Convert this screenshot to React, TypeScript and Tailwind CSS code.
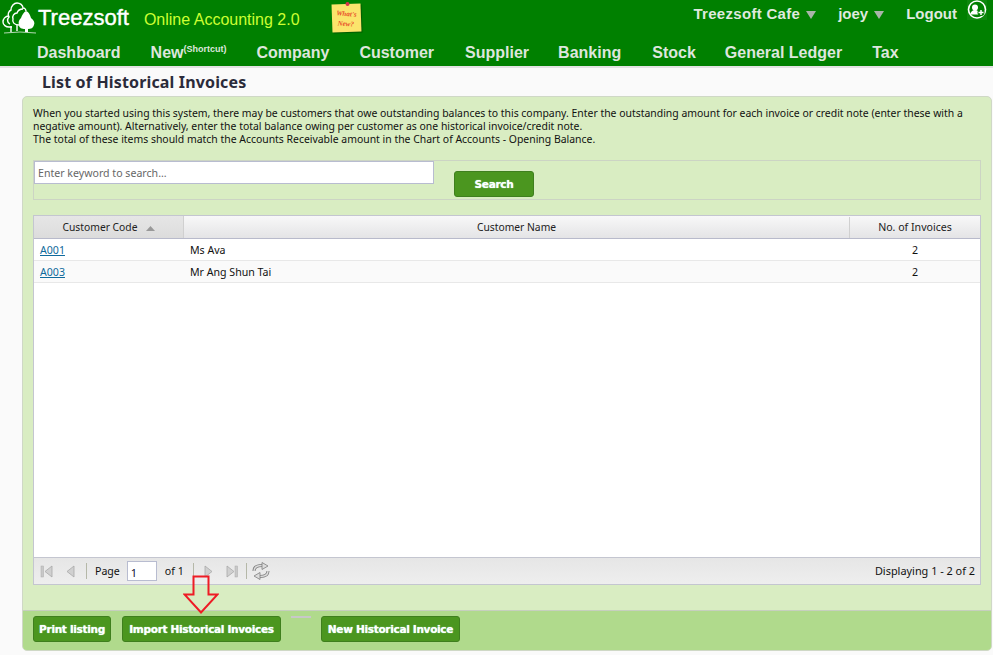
import React from 'react';

const NAV = [
  { label: 'Dashboard', ml: 'ml-[37px]' },
  { label: 'New', ml: 'ml-[30px]', sup: true },
  { label: 'Company', ml: 'ml-[30px]' },
  { label: 'Customer', ml: 'ml-[30px]' },
  { label: 'Supplier', ml: 'ml-[31px]' },
  { label: 'Banking', ml: 'ml-[29px]' },
  { label: 'Stock', ml: 'ml-[31px]' },
  { label: 'General Ledger', ml: 'ml-[29px]' },
  { label: 'Tax', ml: 'ml-[30px]' },
];

const TreeLogo = () => (
  <svg width="36" height="34" viewBox="2 0 36 34" className="shrink-0">
    <g fill="none" stroke="#fff" strokeWidth="1.4">
      <path d="M10 23C7 22 7 18 9 16C7 13 9 10 11 9C11 5 14 2 17 2C20 2 23 4 23 7C25 7 26 9 26 10" />
      <path d="M9 15C5 15 3 18 3 21C3 24 6 26 9 26L12 26" />
      <path d="M19 24C14 24 12 21 13 18C12 15 14 12 17 12C18 9 20 8 23 8" />
      <path d="M11 25v6M17 24v6" />
    </g>
    <path d="M26 10c3 1 4 4 5 7 3 2 4 5 3 7-1 3-3 4-6 4v3h-3v-3c-3 0-6-1-6-4-1-3 0-5 2-7 1-3 3-6 5-7z" fill="#fff" />
    <path d="M4 32Q20 30 36 32" fill="none" stroke="#fff" strokeWidth="1" opacity="0.7" />
  </svg>
);

const Note = () => (
  <div className="relative ml-[32px] mt-[3px] flex h-[28px] w-[29px] -rotate-2 items-center justify-center bg-[#fbe46c] shadow-[1px_1px_1px_rgba(0,0,0,0.3)]">
    <span className="absolute left-[14px] top-[-2px] h-[4px] w-[4px] rounded-full bg-[#d8324a]" />
    <span className="rotate-[6deg] pt-[2px] text-center font-['Liberation_Serif',serif] text-[7px] font-bold italic leading-[10px] text-[#e8502a]">
      What's
      <br />
      New?
    </span>
  </div>
);

const Caret = () => (
  <svg width="10" height="8" viewBox="0 0 10 8" className="ml-[6px] mt-[2px]">
    <path d="M0 0h10L5 8z" fill="#a9b5a9" />
  </svg>
);

const UserAdd = () => (
  <svg width="20" height="20" viewBox="0 0 20 20" className="ml-[10px] mt-[-1px]">
    <rect width="20" height="20" fill="#0d870d" />
    <circle cx="10" cy="9.500" r="8.500" fill="#008000" stroke="#fff" strokeWidth="1.600" />
    <circle cx="8" cy="7.500" r="3" fill="#fff" />
    <path d="M3.500 14.500c0-3 2-4.500 4.500-4.500s4.500 1.500 4.500 4.500z" fill="#fff" />
    <circle cx="14" cy="12.500" r="3.500" fill="#008000" />
    <path d="M14 10v5M11.500 12.500h5" stroke="#fff" strokeWidth="1.500" />
  </svg>
);

const GreenButton = ({ label, className }: { label: string; className: string }) => (
  <button
    type="button"
    className={`h-[26px] rounded-[3px] border border-[#3f7f1e] bg-[#4b961f] pt-[2px] text-center font-['DejaVu_Sans',sans-serif] text-[10.500px] font-bold tracking-[-0.3px] text-white [text-shadow:0_0_1px_#cfe] ${className}`}
  >
    {label}
  </button>
);

const PagerIcon = ({ d, bar }: { d: string; bar?: number }) => (
  <svg width="16" height="16" viewBox="0 0 16 16">
    {bar !== undefined && <rect x={bar} y="3" width="2.500" height="11" fill="#c8c8c8" stroke="#aaa" strokeWidth="0.500" />}
    <path d={d} fill="#d0d0d0" stroke="#a8a8a8" strokeWidth="0.800" />
  </svg>
);

const Sep = () => <div className="h-[16px] w-px bg-[#b5b8a8]" />;

const Row = ({ code, name, count, alt }: { code: string; name: string; count: number; alt?: boolean }) => (
  <div className={`flex h-[22px] items-center border-b border-[#e8e8e8] pt-[2px] text-[10.600px] ${alt ? 'bg-[#fafafa]' : 'bg-white'}`}>
    <div className="w-[150px] pl-[6px]">
      <a href="#" className="text-[#0f6a9c] underline">
        {code}
      </a>
    </div>
    <div className="flex-1 pl-[6px] text-[#111]">{name}</div>
    <div className="w-[130px] text-center text-[#111]">{count}</div>
  </div>
);

export default function App() {
  return (
    <div className="flex h-[655px] w-[993px] flex-col overflow-hidden bg-[#fafafa] font-['Noto_Sans',sans-serif] text-[11px]">
      {/* top header */}
      <header className="h-[68px] shrink-0 border-b-2 border-[#e2e2e2] bg-[#008000]">
        <div className="flex h-[37px] items-start pl-[2px] pt-px">
          <TreeLogo />
          <span className="mt-[1px] font-['Liberation_Sans',sans-serif] text-[22px] leading-[31px] text-white [-webkit-text-stroke:0.4px_#fff]">
            Treezsoft
          </span>
          <span className="ml-[15px] mt-[4px] font-['Liberation_Sans',sans-serif] text-[16px] leading-[30px] text-[#ccff33]">
            Online Accounting 2.0
          </span>
          <Note />
          <div className="ml-auto flex items-start pr-[6px] font-['Liberation_Sans',sans-serif] text-[15px] font-bold leading-[25px] text-[#dfe9df]">
            <span className="flex items-center">
              <span className="tracking-[0.3px]">Treezsoft Cafe</span>
              <Caret />
            </span>
            <span className="ml-[22px] flex items-center">
              joey
              <Caret />
            </span>
            <span className="ml-[22px]">Logout</span>
            <UserAdd />
          </div>
        </div>
        <nav className="flex h-[29px] items-center pt-[2px] font-['Liberation_Sans',sans-serif] text-[16px] font-bold text-[#dde6dd]">
          {NAV.map((n) => (
            <span key={n.label} className={n.ml}>
              {n.label}
              {n.sup && <sup className="top-[-6px] text-[9px] leading-none">(Shortcut)</sup>}
            </span>
          ))}
        </nav>
      </header>

      <h1 className="ml-[42px] h-[28px] shrink-0 text-[16px] font-bold leading-[28px] tracking-[0.15px] text-[#2b2b3a]">
        List of Historical Invoices
      </h1>

      {/* main panel */}
      <main className="mb-[4px] ml-[22px] mr-px flex flex-1 flex-col overflow-hidden rounded-[5px] border border-[#cfd8c6] bg-[#d9edc2]">
        <div className="flex min-h-0 flex-1 flex-col px-[10px]">
          <p className="mt-[10px] h-[53px] text-[10.430px] leading-[13px] text-[#111]">
            When you started using this system, there may be customers that owe outstanding balances to this company. Enter the outstanding amount for each invoice or credit note (enter these with a negative amount). Alternatively, enter the total balance owing per customer as one historical invoice/credit note.
            <br />
            The total of these items should match the Accounts Receivable amount in the Chart of Accounts - Opening Balance.
          </p>

          <div className="flex h-[40px] items-start border border-[#ccd4c4]">
            <input
              readOnly
              placeholder="Enter keyword to search..."
              className="h-[23px] w-[400px] border border-[#b8bcd0] bg-white px-[3px] text-[10.600px] outline-none placeholder:text-[#666]"
            />
            <GreenButton label="Search" className="ml-[20px] mt-[10px] w-[80px]" />
          </div>

          {/* grid */}
          <div className="mb-[25px] mt-[15px] flex min-h-0 flex-1 flex-col border border-[#c4c6d0] bg-white">
            <div className="flex h-[23px] shrink-0 border-b border-[#b8bacb] bg-gradient-to-b from-[#f8f8f8] to-[#e4e4e6] pt-px text-[10.300px] text-[#222]">
              <div className="-mt-px flex w-[150px] items-center justify-center border-r border-[#d0d0d0] bg-gradient-to-b from-[#e6e6e6] to-[#dcdcdc] pt-[2px]">
                Customer Code
                <svg width="9" height="5" viewBox="0 0 9 5" className="ml-[8px]">
                  <path d="M0 5L4.500 0 9 5z" fill="#999" />
                </svg>
              </div>
              <div className="flex flex-1 items-center justify-center border-r border-[#d0d0d0] pt-px">Customer Name</div>
              <div className="flex w-[130px] items-center justify-center pt-px text-[10.600px]">No. of Invoices</div>
            </div>
            <Row code="A001" name="Ms Ava" count={2} />
            <Row code="A003" name="Mr Ang Shun Tai" count={2} alt />
            <div className="flex-1" />
            <div className="flex h-[27px] shrink-0 items-center border-t border-[#c4c6d0] bg-gradient-to-b from-[#e6e6e6] to-[#eeeeee] pl-[5px] pr-[5px] text-[10.600px] text-[#111]">
              <PagerIcon d="M13 3v11L6 8.500z" bar={2} />
              <div className="ml-[7px]">
                <PagerIcon d="M12 3v11L5 8.500z" />
              </div>
              <div className="ml-[8px]">
                <Sep />
              </div>
              <span className="ml-[8px] pt-[2px]">Page</span>
              <input
                readOnly
                value="1"
                className="ml-[7px] h-[20px] w-[30px] border border-[#b8bcd0] bg-white px-[3px] pt-[2px] text-[11px] text-[#113] outline-none"
              />
              <span className="ml-[8px] pt-[2px]">of 1</span>
              <div className="ml-[9px]">
                <Sep />
              </div>
              <div className="ml-[7px]">
                <PagerIcon d="M4 3v11l7-5.500z" />
              </div>
              <div className="ml-[7px]">
                <PagerIcon d="M3 3v11l7-5.500z" bar={11} />
              </div>
              <div className="ml-[6px]">
                <Sep />
              </div>
              <svg width="18" height="18" viewBox="0 0 18 18" className="ml-[5px]">
                <g fill="none" stroke="#7f7f7f" strokeWidth="3">
                  <path d="M2 9C2 5 5 3.500 10 3.500" />
                  <path d="M16 9C16 13 13 14.500 8 14.500" />
                </g>
                <g fill="none" stroke="#dcdcdc" strokeWidth="1.400">
                  <path d="M2 9C2 5 5 3.500 10 3.500" />
                  <path d="M16 9C16 13 13 14.500 8 14.500" />
                </g>
                <path d="M10 0.500l6 3.500-6 3.500zM8 10.500l-6 3.500 6 3.500z" fill="#dcdcdc" stroke="#7f7f7f" strokeWidth="0.800" />
              </svg>
              <span className="ml-auto pt-px text-[10.900px]">Displaying 1 - 2 of 2</span>
            </div>
          </div>
        </div>

        {/* bottom action bar */}
        <footer className="flex h-[40px] shrink-0 items-start border-t border-[#c6cfbe] bg-[#b0da8c] pl-[10px] pt-[5px]">
          <GreenButton label="Print listing" className="w-[78px]" />
          <GreenButton label="Import Historical Invoices" className="ml-[11px] w-[159px]" />
          <div className="ml-[10px] h-[2px] w-[20px] bg-[#c8c8c8]" />
          <GreenButton label="New Historical Invoice" className="ml-[10px] w-[139px]" />
        </footer>
      </main>

      {/* annotation arrow */}
      <svg width="36" height="39" viewBox="0 0 36 39" className="absolute left-[183px] top-[575px]">
        <path d="M10.500 1.500h15v18h9L18 37.500 1.500 19.500h9z" fill="none" stroke="#ee1c25" strokeWidth="2" />
      </svg>
    </div>
  );
}
